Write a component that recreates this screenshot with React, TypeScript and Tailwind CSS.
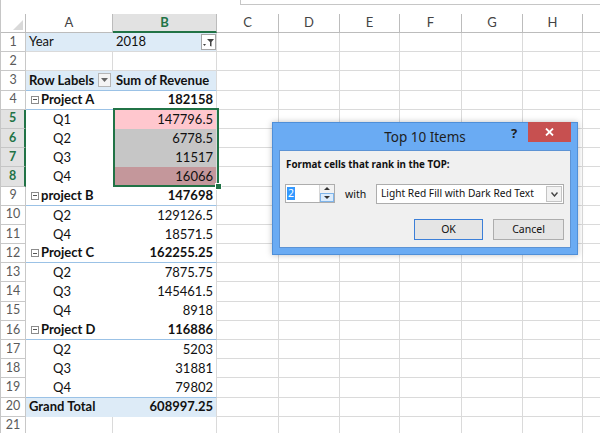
import React from 'react';

type Kind = 'filter' | 'empty' | 'header' | 'sub' | 'item' | 'total';
type R = { n: number; kind: Kind; a?: string; b?: string; bcls?: string };

const rows: R[] = [
  { n: 1, kind: 'filter', a: 'Year', b: '2018' },
  { n: 2, kind: 'empty' },
  { n: 3, kind: 'header', a: 'Row Labels', b: 'Sum of Revenue' },
  { n: 4, kind: 'sub', a: 'Project A', b: '182158' },
  { n: 5, kind: 'item', a: 'Q1', b: '147796.5', bcls: 'bg-[#ffc7ce] text-[#9c0006]' },
  { n: 6, kind: 'item', a: 'Q2', b: '6778.5', bcls: 'bg-[#c6c6c6]' },
  { n: 7, kind: 'item', a: 'Q3', b: '11517', bcls: 'bg-[#c6c6c6]' },
  { n: 8, kind: 'item', a: 'Q4', b: '16066', bcls: 'bg-[#c4979b] text-[#8a0a10]' },
  { n: 9, kind: 'sub', a: 'project B', b: '147698' },
  { n: 10, kind: 'item', a: 'Q2', b: '129126.5' },
  { n: 11, kind: 'item', a: 'Q4', b: '18571.5' },
  { n: 12, kind: 'sub', a: 'Project C', b: '162255.25' },
  { n: 13, kind: 'item', a: 'Q2', b: '7875.75' },
  { n: 14, kind: 'item', a: 'Q3', b: '145461.5' },
  { n: 15, kind: 'item', a: 'Q4', b: '8918' },
  { n: 16, kind: 'sub', a: 'Project D', b: '116886' },
  { n: 17, kind: 'item', a: 'Q2', b: '5203' },
  { n: 18, kind: 'item', a: 'Q3', b: '31881' },
  { n: 19, kind: 'item', a: 'Q4', b: '79802', bcls: '' },
  { n: 20, kind: 'total', a: 'Grand Total', b: '608997.25' },
  { n: 21, kind: 'empty' },
];

const otherCols = [62, 61, 60, 62, 61, 60];
const letters = ['C', 'D', 'E', 'F', 'G', 'H'];

function MinusBox() {
  return (
    <span className="inline-flex w-[8px] h-[8px] border border-[#8c8c8c] bg-white items-center justify-center mr-[2px] shrink-0">
      <span className="block w-[4px] h-[1px] bg-[#555]" />
    </span>
  );
}

function FilterBtn() {
  return (
    <span className="flex w-[15px] h-[16px] border border-[#a6a6a6] bg-white items-center justify-center">
      <svg width="11" height="9" viewBox="0 0 11 9">
        <path d="M4 1h7L8.5 4v4.5L7 8V4z" fill="#444" />
        <path d="M0 6h3L1.5 8z" fill="#444" />
      </svg>
    </span>
  );
}

function DropBtn() {
  return (
    <span className="flex w-[13px] h-[14px] border border-[#b5b5b5] bg-[#f4f4f4] items-center justify-center">
      <svg width="7" height="4" viewBox="0 0 7 4">
        <path d="M0 0h7L3.5 4z" fill="#666" />
      </svg>
    </span>
  );
}

function RowLine({ r }: { r: R }) {
  const sel = r.n >= 5 && r.n <= 8;
  let aCls = '';
  let bCls = '';
  let aContent: React.ReactNode = null;
  let bContent: React.ReactNode = null;
  if (r.kind === 'empty') {
    aCls = 'border-r border-b border-[#dadada]';
    bCls = 'border-r border-b border-[#dadada]';
  } else if (r.kind === 'filter') {
    aCls = 'bg-[#ddebf7] border-b border-[#dadada]';
    bCls = 'bg-[#ddebf7] border-r border-b border-[#dadada]';
    aContent = <span className="pl-[3px]">{r.a}</span>;
    bContent = (
      <div className="flex items-center justify-between w-full pl-[3px]">
        <span>{r.b}</span>
        <FilterBtn />
      </div>
    );
  } else if (r.kind === 'header') {
    aCls = 'bg-[#ddebf7] border-b border-[#9bc2e6] font-bold';
    bCls = 'bg-[#ddebf7] border-r border-r-[#dadada] border-b border-b-[#9bc2e6] font-bold';
    aContent = (
      <div className="flex items-center justify-between w-full pl-[3px] pr-[2px]">
        <span>{r.a}</span>
        <DropBtn />
      </div>
    );
    bContent = <span className="pl-[3px]">{r.b}</span>;
  } else if (r.kind === 'sub') {
    aCls = 'border-b border-[#9bc2e6] font-bold';
    bCls = 'border-r border-r-[#dadada] border-b border-b-[#9bc2e6] font-bold justify-end';
    aContent = (
      <div className="flex items-center pl-[5px]">
        <MinusBox />
        <span>{r.a}</span>
      </div>
    );
    bContent = <span className="pr-[3px]">{r.b}</span>;
  } else if (r.kind === 'item') {
    aCls = r.n === 19 ? 'border-b border-[#9bc2e6]' : '';
    bCls = `border-r border-r-[#dadada] justify-end ${r.n === 19 ? 'border-b border-b-[#9bc2e6]' : ''} ${r.bcls ?? ''}`;
    aContent = <span className="pl-[27px]">{r.a}</span>;
    bContent = <span className="pr-[3px]">{r.b}</span>;
  } else if (r.kind === 'total') {
    aCls = 'bg-[#ddebf7] font-bold';
    bCls = 'bg-[#ddebf7] border-r border-r-[#dadada] font-bold justify-end';
    aContent = <span className="pl-[3px]">{r.a}</span>;
    bContent = <span className="pr-[3px]">{r.b}</span>;
  }
  return (
    <div className="flex h-[19.2px] shrink-0">
      <div
        className={`w-[25px] shrink-0 flex items-center justify-center text-[12.5px] ${
          sel
            ? 'bg-[#e2e2e2] text-[#217346] font-bold border-r-2 border-[#217346] border-b border-b-[#c6c6c6]'
            : 'text-[#5a5a5a] border-r border-b border-[#c8c8c8]'
        }`}
      >
        {r.n}
      </div>
      <div className={`w-[87px] shrink-0 flex items-center text-[#111] whitespace-nowrap ${aCls}`}>{aContent}</div>
      <div className={`w-[104px] shrink-0 flex items-center text-[#111] whitespace-nowrap ${bCls}`}>{bContent}</div>
      {otherCols.map((w, i) => (
        <div key={i} style={{ width: w }} className="shrink-0 border-r border-b border-[#dadada]" />
      ))}
      <div className="flex-1 border-b border-[#dadada]" />
    </div>
  );
}

function Dialog() {
  return (
    <div className="absolute left-[271px] top-[122px] w-[306px] h-[133px] bg-[#6aabf3] border border-[#4f8fd8] font-['Noto_Sans',sans-serif] shadow-[0_0_6px_rgba(0,0,0,0.25)]">
      <div className="relative h-[27px]">
        <div className="absolute inset-x-0 top-[4px] text-center text-[13.5px] text-[#1e1e1e]">Top 10 Items</div>
        <div className="absolute left-[238px] top-[1px] text-[13px] font-bold text-[#1e1e1e]">?</div>
        <div className="absolute left-[255px] top-[-1px] w-[43px] h-[20px] bg-[#c75050] flex items-center justify-center">
          <svg width="9" height="8" viewBox="0 0 9 8">
            <path d="M1 0.5l7 7M8 0.5l-7 7" stroke="#fff" strokeWidth="1.8" />
          </svg>
        </div>
      </div>
      <div className="mx-[6px] h-[98px] bg-[#f0f0f0] border border-[#5d93d4] relative text-[10px] text-[#111]">
        <div className="absolute left-[6px] top-[7px] font-bold text-[9.8px]">Format cells that rank in the TOP:</div>
        <div className="absolute left-[5px] top-[33px] w-[50px] h-[19px] border border-[#adadad] bg-white flex">
          <div className="flex-1 flex items-center pl-[1px] text-[10.5px]">
            <span className="bg-[#3399ff] text-white leading-[13px] px-[1px]">2</span>
          </div>
          <div className="w-[15px] flex flex-col border-l border-[#d6d6d6]">
            <div className="flex-1 flex items-center justify-center bg-[#f2f2f2]">
              <svg width="6" height="3" viewBox="0 0 6 3"><path d="M0 3h6L3 0z" fill="#333" /></svg>
            </div>
            <div className="flex-1 flex items-center justify-center bg-[#dcecfc] border border-[#7eb4ea]">
              <svg width="6" height="3" viewBox="0 0 6 3"><path d="M0 0h6L3 3z" fill="#333" /></svg>
            </div>
          </div>
        </div>
        <div className="absolute left-[65px] top-[36px] text-[10.5px]">with</div>
        <div className="absolute left-[96px] top-[33px] w-[188px] h-[20px] border border-[#adadad] bg-white flex items-center">
          <span className="pl-[4px] flex-1 text-[10.2px] whitespace-nowrap">Light Red Fill with Dark Red Text</span>
          <div className="w-[16px] h-[16px] mr-[1px] border border-[#c4c4c4] bg-[#f2f2f2] flex items-center justify-center">
            <svg width="7" height="5" viewBox="0 0 7 5"><path d="M0.5 0.5L3.5 4L6.5 0.5" stroke="#444" strokeWidth="1.4" fill="none" /></svg>
          </div>
        </div>
        <div className="absolute left-[134px] top-[68px] w-[69px] h-[21px] border border-[#3c7fd8] bg-[#e5e5e5] flex items-center justify-center text-[10.5px]">
          OK
        </div>
        <div className="absolute left-[213px] top-[68px] w-[71px] h-[21px] border border-[#adadad] bg-[#e5e5e5] flex items-center justify-center text-[10.5px]">
          Cancel
        </div>
      </div>
    </div>
  );
}

export default function App() {
  return (
    <div className="relative w-[600px] h-[433px] overflow-hidden bg-white border-l border-[#c6c6c6] font-['Lato',sans-serif] text-[13px]">
      <div className="flex h-[14px]">
        <div className="w-[239px] shrink-0" />
        <div className="flex-1 h-[5px] border-l border-b border-[#c6c6c6]" />
      </div>
      <div className="flex h-[19px] text-[13px] text-[#444]">
        <div className="w-[25px] shrink-0 border-r border-b border-[#bcbcbc] flex items-end justify-end pr-[2px] pb-[2px]">
          <svg width="10" height="10" viewBox="0 0 10 10"><path d="M10 0V10H0z" fill="#d9d9d9" /></svg>
        </div>
        <div className="w-[87px] shrink-0 border-r border-b border-[#bcbcbc] flex items-center justify-center">A</div>
        <div className="w-[104px] shrink-0 bg-[#e2e2e2] border-r border-r-[#bcbcbc] border-b-2 border-b-[#217346] flex items-center justify-center font-bold text-[#217346]">B</div>
        {otherCols.map((w, i) => (
          <div key={i} style={{ width: w }} className="shrink-0 border-r border-b border-[#bcbcbc] flex items-center justify-center">
            {letters[i]}
          </div>
        ))}
        <div className="flex-1 border-b border-[#bcbcbc]" />
      </div>
      {rows.map((r) => (
        <RowLine key={r.n} r={r} />
      ))}
      <div className="absolute left-[112px] top-[108px] w-[106px] h-[79px] border-2 border-[#217346] pointer-events-none" />
      <div className="absolute left-[214px] top-[183px] w-[7px] h-[7px] bg-[#217346] border border-white pointer-events-none" />
      <Dialog />
    </div>
  );
}
